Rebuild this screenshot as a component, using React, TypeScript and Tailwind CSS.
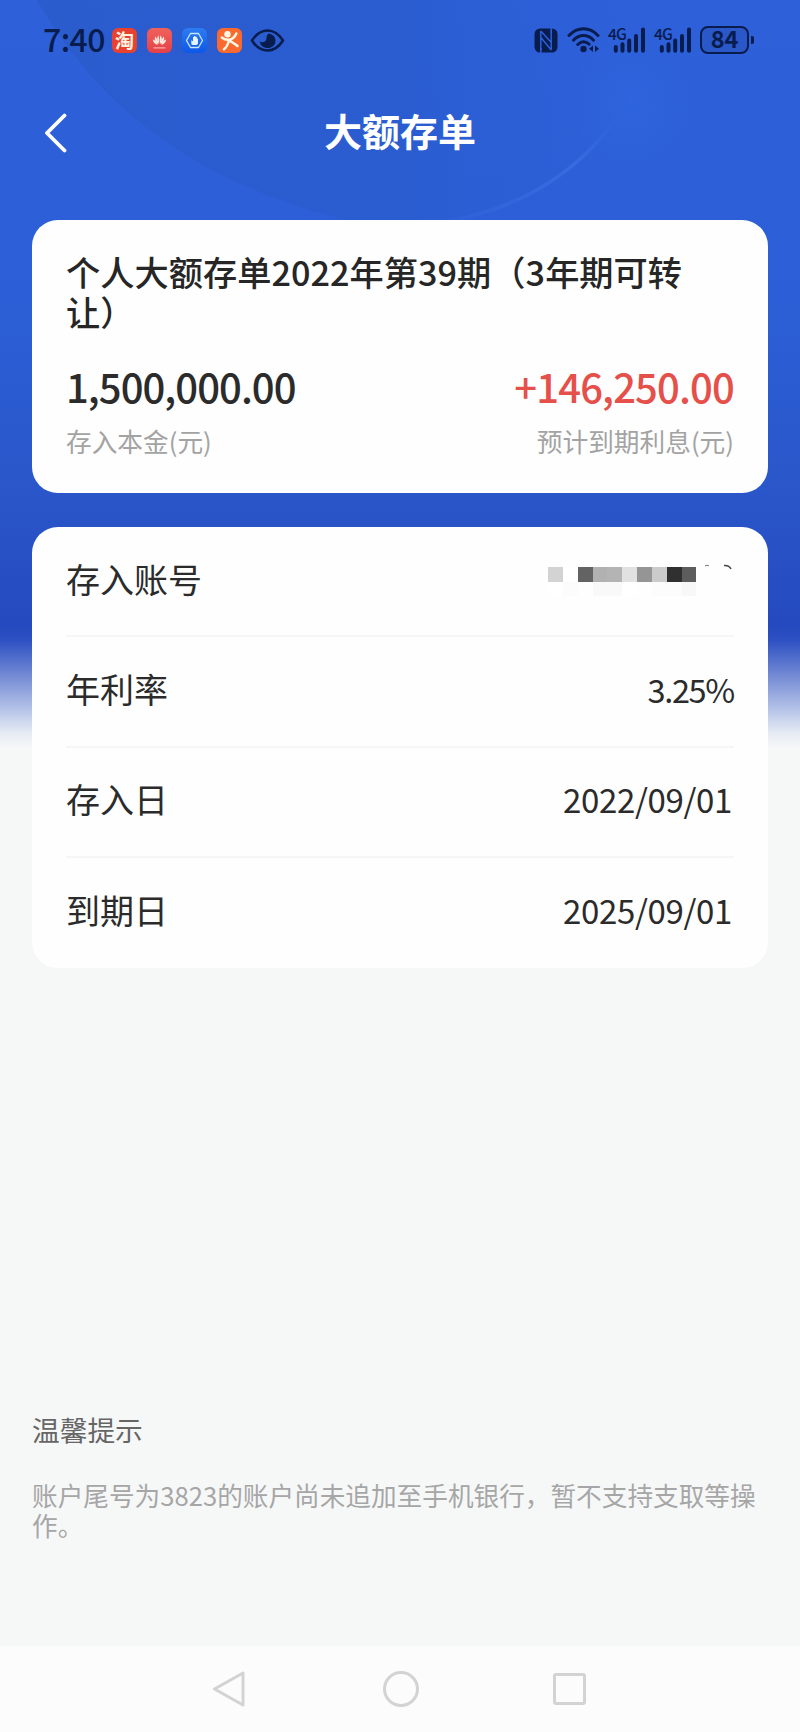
import type { ReactNode } from "react";

const DETAIL_ROWS = [
  { label: "年利率", value: "3.25%" },
  { label: "存入日", value: "2022/09/01" },
  { label: "到期日", value: "2025/09/01" },
];

/** Shades of the blocks that hide the account number, left to right. */
const MASK_BLOCKS = [
  { base: "#d3d3d3", below: "#ffffff" },
  { base: "#ffffff", below: "#fcfcfc" },
  { base: "#636363", below: "#fefefe" },
  { base: "#b1b1b1", below: "#f9f9f9" },
  { base: "#b4b4b4", below: "#f9f9f9" },
  { base: "#e1e1e1", below: "#ffffff" },
  { base: "#959595", below: "#fefefe" },
  { base: "#cbcbcb", below: "#fcfcfc" },
  { base: "#303030", below: "#fcfcfc" },
  { base: "#5d5d5d", below: "#f8f8f8" },
];

function HeaderBackdrop() {
  return (
    <svg
      aria-hidden="true"
      className="absolute left-0 top-0 -z-10"
      fill="none"
      height="222"
      viewBox="0 0 800 222"
      width="800"
    >
      <defs>
        <linearGradient id="disc" x1="0" x2="1" y1="0" y2="0">
          <stop offset="0" stopColor="#295bcb" stopOpacity="0.8" />
          <stop offset="0.6" stopColor="#295bcb" stopOpacity="0.6" />
          <stop offset="1" stopColor="#2c5fd8" stopOpacity="0" />
        </linearGradient>
        <linearGradient id="edge" x1="0" x2="1" y1="1" y2="0">
          <stop offset="0" stopColor="#3a6ee2" stopOpacity="0.2" />
          <stop offset="0.65" stopColor="#3a6ee2" stopOpacity="0.8" />
          <stop offset="1" stopColor="#3a6ee2" stopOpacity="0" />
        </linearGradient>
        <radialGradient id="glow">
          <stop offset="0" stopColor="#2f66e0" stopOpacity="0.6" />
          <stop offset="1" stopColor="#2f66e0" stopOpacity="0" />
        </radialGradient>
      </defs>
      <ellipse cx="630" cy="105" fill="url(#glow)" rx="65" ry="75" />
      <path
        d="M37 0C85 84 170 178 355 222H450C535 206 585 165 618 115C640 80 648 40 648 0Z"
        fill="url(#disc)"
      />
      <path
        d="M450 221C530 205 580 168 617 118"
        stroke="url(#edge)"
        strokeLinecap="round"
        strokeWidth="3.500"
      />
    </svg>
  );
}

function AppBadge({ className, children }: { className: string; children: ReactNode }) {
  return (
    <span
      className={`flex size-[25px] items-center justify-center rounded-[6px] ${className}`}
    >
      {children}
    </span>
  );
}

function NotificationIcons() {
  return (
    <div className="flex items-center gap-[10px]">
      <AppBadge className="bg-[#e8412f] pb-[2px] text-[19px] font-bold leading-[23px] text-[#fff3e0]">
        淘
      </AppBadge>
      <AppBadge className="bg-gradient-to-b from-[#f0625c] to-[#e44048]">
        <svg fill="#ffeadf" height="25" viewBox="0 0 25 25" width="25">
          <path d="M12 16C9.900 13.500 9.700 9.500 11.300 7.300C12.200 9 12.500 13 12 16Z" />
          <path d="M13 16C15.100 13.500 15.300 9.500 13.700 7.300C12.800 9 12.500 13 13 16Z" />
          <path d="M11.300 16.200C8.300 14.500 7.200 11.300 8.100 8.600C10 10.200 11.300 13 11.300 16.200Z" />
          <path d="M13.700 16.200C16.700 14.500 17.800 11.300 16.900 8.600C15 10.200 13.700 13 13.700 16.200Z" />
          <path d="M10.800 16.800C8 16.600 6 14.400 5.900 11.600C8.300 12.400 10.100 14.400 10.800 16.800Z" />
          <path d="M14.200 16.800C17 16.600 19 14.400 19.100 11.600C16.700 12.400 14.900 14.400 14.200 16.800Z" />
          <path d="M6.500 19.300h12v1.200h-12z" opacity="0.65" />
        </svg>
      </AppBadge>
      <AppBadge className="bg-gradient-to-b from-[#2c7cf2] to-[#0d57e8]">
        <svg fill="none" height="25" viewBox="0 0 25 25" width="25">
          <path
            d="M8.500 5.500h8l4 7-4 7h-8l-4-7z"
            stroke="#c8e6fa"
            strokeLinejoin="round"
            strokeWidth="1.300"
          />
          <path
            d="M9.300 12.300V15.500Q9.300 17 11 17H14.300Q16 17 16 15.300V10.500H14.800V8.800H13.400V8H12.100V9H11V13.300Z"
            fill="#e6f6fd"
          />
        </svg>
      </AppBadge>
      <AppBadge className="bg-[#fa6a2e]">
        <svg fill="none" height="25" viewBox="0 0 25 25" width="25">
          <circle cx="10.500" cy="6.300" fill="#fff6e4" r="3.200" />
          <path
            d="M4.800 9.500C7.500 11.800 10 12.200 12.800 11.600C16 10.800 18 8.500 19.300 5.500M11.800 12C11.500 15.500 9.800 18.800 7 21.300M13 12.800C15 14.500 18 15.500 20.500 18"
            stroke="#fff6e4"
            strokeLinecap="round"
            strokeWidth="2.500"
          />
        </svg>
      </AppBadge>
      <svg className="-ml-[2px]" fill="none" height="25" viewBox="0 0 35 25" width="35">
        <path
          d="M2 12.500C6.500 5.500 11.500 2.500 17.500 2.500S28.500 5.500 33 12.500C28.500 19.500 23.500 22.500 17.500 22.500S6.500 19.500 2 12.500Z"
          stroke="#081c4e"
          strokeLinejoin="round"
          strokeWidth="2.600"
        />
        <path
          d="M18 5.500C22.500 6 25.500 8.800 25.500 12.700C25.500 17 22 20 17.700 20C13.400 20 10.300 17.500 9.800 13.500C12 14.800 14.800 14.300 16 12.300C17 10.500 16 9 17 7.300C17.500 6.500 18.300 6.300 18 5.500Z"
          fill="#081c4e"
        />
      </svg>
    </div>
  );
}

function SignalIcon() {
  return (
    <div className="relative h-[26px] w-[38px]">
      <span className="absolute left-0 top-0 text-[15.500px] font-medium leading-[12px] tracking-[-0.8px]">
        4G
      </span>
      <svg fill="none" height="26" viewBox="0 0 38 26" width="38">
        <path
          d="M7.800 20V23.700M14.500 17.300V23.700M21.200 13.500V23.700M28 9V23.700M35 2.500V23.700"
          stroke="currentColor"
          strokeLinecap="round"
          strokeWidth="4"
        />
      </svg>
    </div>
  );
}

function StatusBar() {
  return (
    <div className="flex h-20 items-center pl-[43px] pr-[46px] text-[#081c4e]">
      <span className="w-[69px] pb-[4px] text-[32px] font-medium leading-none tracking-[-0.600px]">
        7:40
      </span>
      <NotificationIcons />
      <div className="ml-auto flex items-center">
        <svg fill="none" height="25" viewBox="0 0 24 25" width="24">
          <rect fill="currentColor" height="24" rx="5.500" width="23" x=".5" y=".5" />
          <path
            d="M6.800 22V3.500M17.200 3V21.500M7.300 3.500L16.800 14M7.300 10L16.800 21.500"
            stroke="#2c5fd8"
            strokeLinecap="round"
            strokeWidth="1.500"
          />
          <path d="M17.200 0V5M6.800 20V25" stroke="#2c5fd8" strokeWidth="1.500" />
        </svg>
        <svg
          className="ml-[9px]"
          fill="none"
          height="26"
          viewBox="0 0 33 26"
          width="33"
        >
          <path
            d="M2 8.500C10.500-.5 22.500-.5 31 8.500M6.500 13.200C12.500 7 20.500 7 26.500 13.200M10.800 17.500C14.500 14 18.500 14 22 17.200"
            stroke="currentColor"
            strokeLinecap="round"
            strokeWidth="3"
          />
          <circle cx="16.500" cy="22" fill="currentColor" r="3.200" />
          <path
            d="M26 18.500V25L22 21.700ZM28 18.500V25L32 21.700Z"
            fill="currentColor"
          />
        </svg>
        <div className="ml-2 flex gap-2">
          <SignalIcon />
          <SignalIcon />
        </div>
        <div className="ml-2 flex h-[28px] w-[49px] items-center justify-center rounded-[8px] border-2 border-current bg-[#2850b8]/50 pb-[3px] text-[23.500px] font-bold leading-none">
          84
        </div>
        <span className="ml-[2px] h-2 w-[3px] rounded-r-[2px] bg-current" />
      </div>
    </div>
  );
}

function NavBar() {
  return (
    <header className="grid h-[140px] grid-cols-3 items-start px-[43px] pt-[29px]">
      <button aria-label="返回" className="mt-[4px] w-fit" type="button">
        <svg fill="none" height="40" viewBox="0 0 26 40" width="26">
          <path
            d="M21.500 2.500L4 20L21.500 37.500"
            stroke="#fff"
            strokeLinecap="round"
            strokeLinejoin="round"
            strokeWidth="3.800"
          />
        </svg>
      </button>
      <h1 className="whitespace-nowrap text-center text-[38px] font-bold leading-[42px] text-white">
        大额存单
      </h1>
    </header>
  );
}

function SummaryCard() {
  return (
    <section className="h-[273px] rounded-[26px] bg-[#fefefe] px-[34px] pt-[31px]">
      <h2 className="w-[640px] text-[34.200px] font-medium leading-[40px] tracking-[0.050px] text-[#262626]">
        个人大额存单2022年第39期（3年期可转让）
      </h2>
      <div className="mt-[32px] flex justify-between">
        <div>
          <p className="text-[40px] font-medium leading-[46px] tracking-[-0.950px] text-[#2b2b2b]">
            1,500,000.00
          </p>
          <p className="mt-[14px] text-[25.700px] leading-[36px] text-[#a3a3a3]">
            存入本金(元)
          </p>
        </div>
        <div className="text-right">
          <p className="text-[40px] font-medium leading-[46px] tracking-[-0.850px] text-[#e5504a]">
            +146,250.00
          </p>
          <p className="mt-[14px] text-[25.700px] leading-[36px] text-[#a3a3a3]">
            预计到期利息(元)
          </p>
        </div>
      </div>
    </section>
  );
}

function MaskedAccount() {
  return (
    <div className="relative flex h-[45px] w-[186px] pt-[11px]">
      {MASK_BLOCKS.map((block, index) => (
        <div className="w-[14.850px]" key={index}>
          <div className="h-[15px]" style={{ backgroundColor: block.base }} />
          <div className="h-[14px]" style={{ backgroundColor: block.below }} />
        </div>
      ))}
      <svg
        aria-hidden="true"
        className="absolute right-0 top-[8px]"
        fill="none"
        height="8"
        viewBox="0 0 32 8"
        width="32"
      >
        <path d="M3 1.800Q5 .8 7 1.800" stroke="#777" />
        <path d="M22 1.500Q27 1 29 5" stroke="#444" strokeWidth="1.500" />
      </svg>
    </div>
  );
}

function DetailRow({ label, children }: { label: string; children: ReactNode }) {
  return (
    <div className="flex h-[110.400px] items-center justify-between border-b-2 border-[#f6f6f6] pb-[5px] text-[34px] leading-[48px] text-[#2b2b2b] last:border-b-0 last:pb-[7px]">
      <span>{label}</span>
      {children}
    </div>
  );
}

function DetailCard() {
  return (
    <section className="mt-[34px] h-[441px] rounded-[26px] bg-[#fefefe] px-[34px]">
      <DetailRow label="存入账号">
        <MaskedAccount />
      </DetailRow>
      {DETAIL_ROWS.map((row) => (
        <DetailRow key={row.label} label={row.label}>
          <span
            className={
              row.value.endsWith("%")
                ? "text-[32.500px] tracking-[-1.300px]"
                : "pr-[2px] text-[33px] tracking-[-0.350px]"
            }
          >
            {row.value}
          </span>
        </DetailRow>
      ))}
    </section>
  );
}

function SystemNav() {
  return (
    <nav className="flex h-[86px] items-center justify-center gap-[134.500px] bg-[#fcfcfc]">
      <svg className="-ml-[2px]" fill="none" height="36" viewBox="0 0 36 36" width="36">
        <path
          d="M31 2V34L2.500 18Z"
          stroke="#d3d3d3"
          strokeLinejoin="round"
          strokeWidth="3"
        />
      </svg>
      <span className="size-9 rounded-full border-[3px] border-[#d3d3d3]" />
      <span className="h-8 w-[33px] rounded-[3px] border-[3px] border-[#d3d3d3]" />
    </nav>
  );
}

export default function App() {
  return (
    <div className="relative isolate flex h-[1732px] w-[800px] flex-col overflow-hidden bg-[#f6f8f8] bg-[linear-gradient(to_bottom,#2d60d9_0px,#2c5fd7_300px,#2a57ca_480px,#254abf_625px,#2d50c2_640px,#7289d4_675px,#b6c4e8_710px,#e4eaf3_732px,#f6f8f8_748px)] font-['Noto_Sans_CJK_SC',sans-serif]">
      <HeaderBackdrop />
      <StatusBar />
      <NavBar />
      <main className="flex flex-1 flex-col px-8">
        <SummaryCard />
        <DetailCard />
        <footer className="mt-[442px]">
          <h3 className="text-[27.700px] leading-[38px] text-[#666]">温馨提示</h3>
          <p className="mt-[32px] text-[25.650px] leading-[30px] text-[#a6a6a6]">
            账户尾号为3823的账户尚未追加至手机银行，暂不支持支取等操作。
          </p>
        </footer>
      </main>
      <SystemNav />
    </div>
  );
}
